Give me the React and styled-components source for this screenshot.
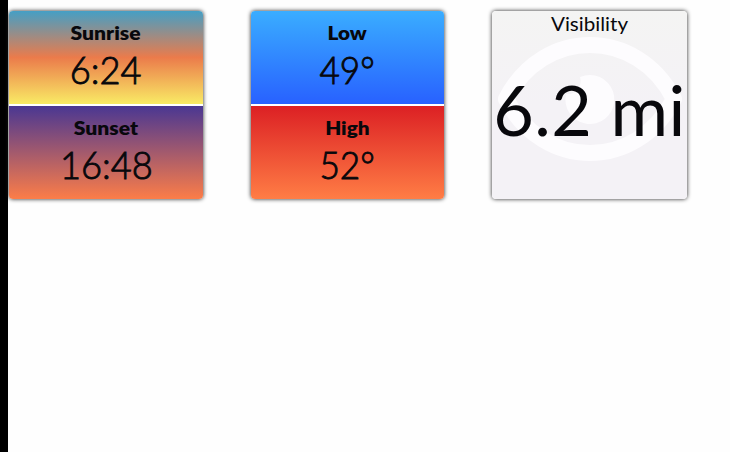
import React from "react";
import styled, { createGlobalStyle } from "styled-components";

const Global = createGlobalStyle`
  * { box-sizing: border-box; }
  html, body { margin: 0; }
  body { background: #fefefe; color: #08080c; font-family: Lato, sans-serif; overflow: hidden; }
`;
const Page = styled.main`
  display: flex;
  align-items: flex-start;
  gap: 47px;
  height: 452px;
  padding-top: 11px;
  border-left: 8px solid #000;
`;
const Card = styled.section`
  display: flex;
  flex-direction: column;
  flex: none;
  gap: ${(p) => (p.$split ? "2px" : "0")};
  width: ${(p) => p.$width}px;
  height: 188px;
  margin-left: 1px;
  border-radius: 4px;
  overflow: hidden;
  background: ${(p) => p.$background};
  box-shadow: 0 0 4px #222;
`;
const Half = styled.div`
  flex: 1;
  display: flex;
  flex-direction: column;
  align-items: center;
  padding-top: 10px;
  background: ${(p) => p.$fill};
`;
const Label = styled.h2`
  margin: 0;
  font: 800 19px/24px Lato, sans-serif;
  transform: scaleX(${(p) => p.$stretch});
`;
const Value = styled.div`
  font: 300 37px/49px Lato, sans-serif;
  -webkit-text-stroke: 0.9px currentColor;
  white-space: nowrap;
  transform: scaleX(${(p) => p.$stretch});
`;
const Title = styled.h2`
  margin: 0;
  text-align: center;
  font: 400 20px/25px Lato, sans-serif;
  transform: scaleX(1.03);
`;
const Reading = styled.div`
  display: grid;
  place-items: center;
  height: 125px;
  > * { grid-area: 1 / 1; }
`;
const Distance = styled.div`
  padding-top: 21px;
  font: 400 70px/98px Lato, sans-serif;
  letter-spacing: 0.4px;
  white-space: nowrap;
`;
const Eye = styled.svg`
  width: 184px;
  height: 124px;
`;

function Period({ label, value, fill, labelStretch, valueStretch = 0.98 }) {
  return (
    <Half $fill={fill}>
      <Label $stretch={labelStretch}>{label}</Label>
      <Value $stretch={valueStretch}>{value}</Value>
    </Half>
  );
}

export default function App() {
  return (
    <>
      <Global />
      <Page>
        <Card $split $width={194} $background="#fff">
          <Period label="Sunrise" value="6:24" labelStretch={1.11} fill="linear-gradient(#459fc5, #eb7b4b 50%, #f9eb65)" />
          <Period label="Sunset" value="16:48" labelStretch={1.11} fill="linear-gradient(#4a3792, #fc7d48)" />
        </Card>
        <Card $split $width={193} $background="#fff">
          <Period label="Low" value="49°" labelStretch={1.09} valueStretch={0.95} fill="linear-gradient(#3aadff, #2861ff)" />
          <Period label="High" value="52°" labelStretch={1.09} valueStretch={0.95} fill="linear-gradient(#dc2024, #ff7d45)" />
        </Card>
        <Card $width={195} $background="linear-gradient(#f4f4f3, #f4f2f6 50%)">
          <Title>Visibility</Title>
          <Reading>
            <Eye viewBox="0 0 184 124">
              <path d="M8 62C45 -10 139 -10 176 62C139 134 45 134 8 62Z" fill="none" stroke="#fdfcfe" strokeWidth="16" strokeLinejoin="round" />
              <path d="M92 38A24.5 24.5 0 1 1 68 57A13 13 0 0 0 82 40Q87 38 92 38Z" fill="#fdfcfe" />
            </Eye>
            <Distance>6.2 mi</Distance>
          </Reading>
        </Card>
      </Page>
    </>
  );
}
